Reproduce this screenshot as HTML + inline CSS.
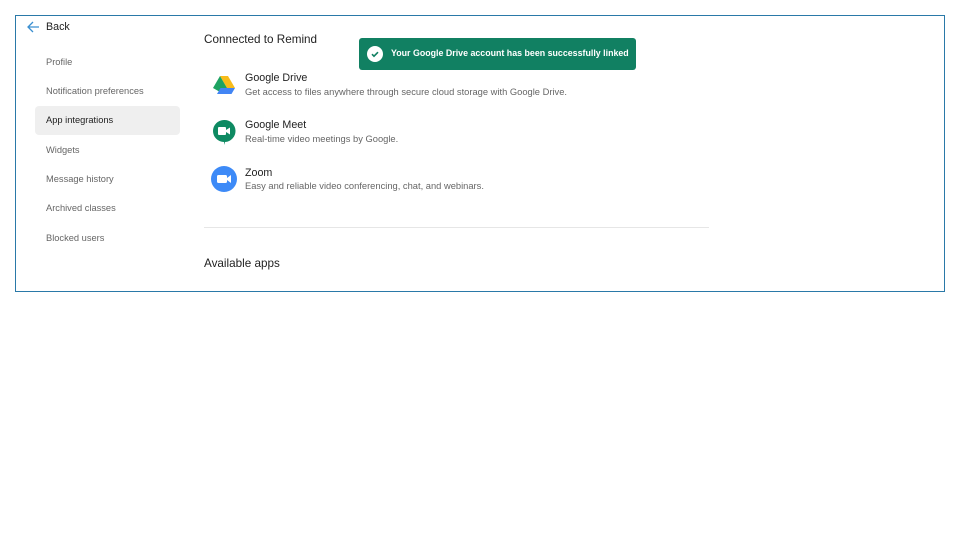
<!DOCTYPE html>
<html><head><style>
*{margin:0;padding:0;box-sizing:border-box}
body{width:960px;height:540px;background:#fff;font-family:"Liberation Sans",sans-serif;position:relative;overflow:hidden}
.frame{position:absolute;left:15px;top:15px;width:930px;height:277px;border:1px solid #2a79a8}
.a{position:absolute;white-space:nowrap}
.nav{font-size:9.3px;color:#666;left:46px}
.sel{position:absolute;left:35px;top:106px;width:145px;height:29px;background:#efefef;border-radius:4px}
.t{font-size:10.7px;color:#222;left:245px}
.d{font-size:9.35px;color:#666;left:245px}
.toast{position:absolute;left:359px;top:38px;width:277px;height:32px;background:#118062;border-radius:3px;color:#fff;font-size:8.85px;font-weight:bold}
</style></head><body>
<div class="frame"></div>
<svg class="a" style="left:26px;top:20px" width="14" height="14" viewBox="0 0 14 14"><path d="M13 7H2M7 2L2 7l5 5" stroke="#3a8fd0" stroke-width="1.3" fill="none"/></svg>
<div class="a" style="left:46px;top:21px;font-size:10.7px;color:#222">Back</div>
<div class="sel"></div>
<div class="a nav" style="top:57px">Profile</div>
<div class="a nav" style="top:86px">Notification preferences</div>
<div class="a nav" style="top:115px;color:#222">App integrations</div>
<div class="a nav" style="top:145px">Widgets</div>
<div class="a nav" style="top:174px">Message history</div>
<div class="a nav" style="top:203px">Archived classes</div>
<div class="a nav" style="top:233px">Blocked users</div>
<div class="a" style="left:204px;top:33px;font-size:11.7px;color:#222">Connected to Remind</div>
<svg class="a" style="left:213px;top:75px" width="22" height="20" viewBox="0 0 22 20"><path d="M7 1h8l7 12h-8z" fill="#f8bc1a"/><path d="M7 1l7 12-3.5 6L0 13z" fill="#1ea362"/><path d="M4 19l3.5-6H22l-3.5 6z" fill="#4285f4"/></svg>
<div class="a t" style="top:72px">Google Drive</div>
<div class="a d" style="top:87px">Get access to files anywhere through secure cloud storage with Google Drive.</div>
<svg class="a" style="left:212px;top:119px" width="24" height="26" viewBox="0 0 24 26"><path d="M12 1a11 11 0 1 0 0 22v3l1-3A11 11 0 0 0 12 1z" fill="#0e8a62"/><rect x="6" y="8" width="8" height="8" rx="1" fill="#fff"/><path d="M14 11l4-2.5v7L14 13z" fill="#fff"/></svg>
<div class="a t" style="top:119px">Google Meet</div>
<div class="a d" style="top:134px">Real-time video meetings by Google.</div>
<svg class="a" style="left:211px;top:166px" width="26" height="26" viewBox="0 0 26 26"><circle cx="13" cy="13" r="13" fill="#3d8af7"/><rect x="6" y="9" width="10" height="8" rx="1.5" fill="#fff"/><path d="M16 12l4-3v8l-4-3z" fill="#fff"/></svg>
<div class="a t" style="top:167px">Zoom</div>
<div class="a d" style="top:181px">Easy and reliable video conferencing, chat, and webinars.</div>
<div class="a" style="left:204px;top:227px;width:505px;height:1px;background:#e6e6e6"></div>
<div class="a" style="left:204px;top:257px;font-size:11.7px;color:#222">Available apps</div>
<div class="toast"><svg class="a" style="left:8px;top:8px" width="16" height="16" viewBox="0 0 16 16"><circle cx="8" cy="8" r="8" fill="#fff"/><path d="M5 8.2l2 2 4-4" stroke="#118062" stroke-width="1.6" fill="none"/></svg><div class="a" style="left:32px;top:10px">Your Google Drive account has been successfully linked</div></div>
</body></html>
